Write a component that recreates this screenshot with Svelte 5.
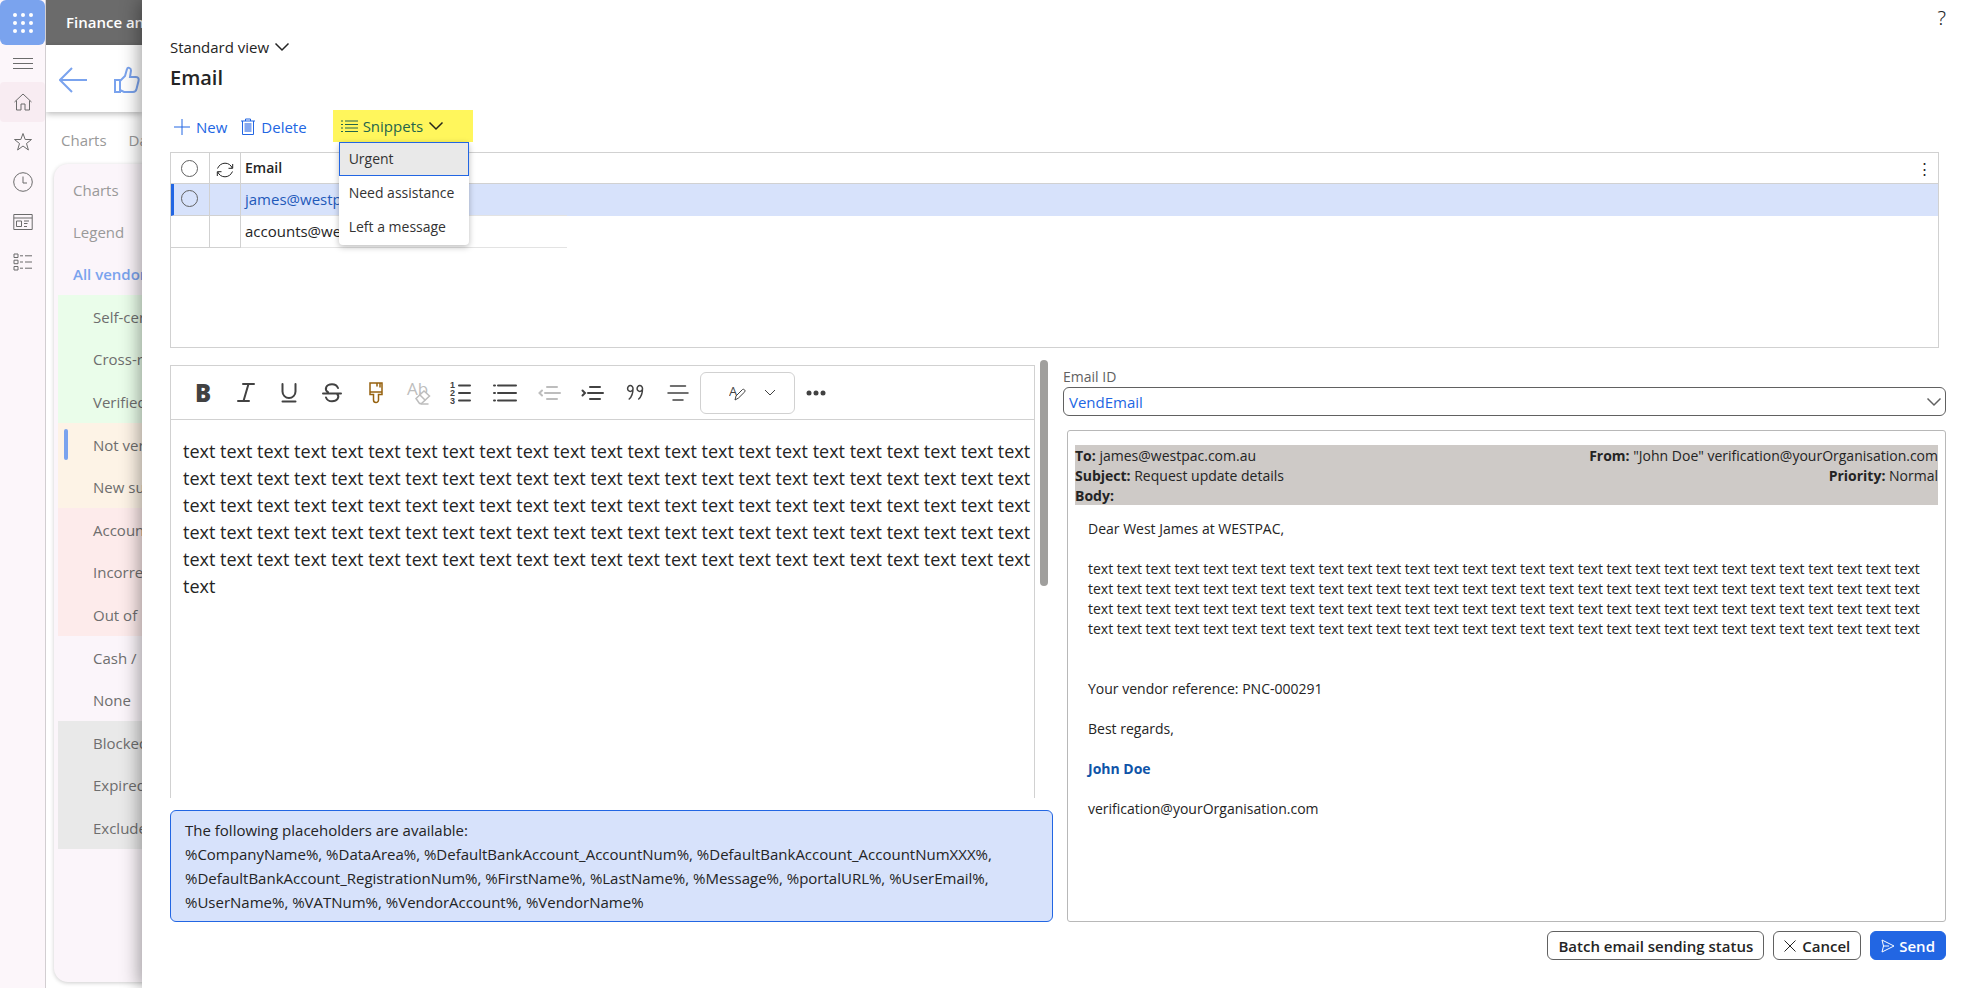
<script>
	let railIcons = ["menu", "home", "star", "clock", "workspace", "modules"]

	let groups = [
		{ tone: "plain", items: ["Charts", "Legend", "All vendors"] },
		{ tone: "green", items: ["Self-certified", "Cross-referenced", "Verified"] },
		{ tone: "orange", items: ["Not verified", "New suppliers"] },
		{ tone: "red", items: ["Account", "Incorrect", "Out of"] },
		{ tone: "plain", items: ["Cash /", "None"] },
		{ tone: "grey", items: ["Blocked", "Expired", "Excluded"] }
	]

	let contacts = [
		{ email: "james@westpac.com.au", selected: true },
		{ email: "accounts@westpac.com.au", selected: false }
	]

	let snippets = ["Urgent", "Need assistance", "Left a message"]
	let snippetsOpen = true
	let activeSnippet = "Urgent"

	let tools = ["bold", "italic", "underline", "strike", "painter", "clear", "numbers", "bullets", "outdent", "indent", "quote", "center"]

	let emailId = "VendEmail"
	let message = Array(116).fill("text").join(" ")

	function pick(name) {
		activeSnippet = name
		snippetsOpen = false
	}
</script>

{#snippet chevron()}
	<svg class="chevron" width="16" height="10" viewBox="0 0 16 10"><path d="M1.500 1.500L8 8l6.500-6.500" /></svg>
{/snippet}

{#snippet railIcon(name)}
	<svg width="20" height="20" viewBox="0 0 20 20">
		{#if name === "menu"}
			<path d="M0 4.500h20M0 9.500h20M0 14.500h20" />
		{:else if name === "home"}
			<path d="M1.500 10L10 2l8.500 8M3.500 8.500V18h4.500v-6h4v6h4.500V8.500" />
		{:else if name === "star"}
			<path d="M10 1.500l2.200 6h6.300l-5 4 1.900 6.500-5.400-4-5.400 4 1.900-6.500-5-4h6.300z" />
		{:else if name === "clock"}
			<circle cx="10" cy="10" r="9.300" /><path d="M10 4.500V11h4" />
		{:else if name === "workspace"}
			<path d="M.8 2.500h18.400v15H.8zM.8 6h18.400M3.500 9h5v5.500h-5zM11 9h5M11 11.500h3.500M11 14.500h3" />
		{:else}
			<path d="M1 2h4v3.500H1zM1 8.200h4v3.500H1zM1 14.500h4V18H1zM7 3.800h3M12 3.800h7M7 10h3M12 10h7M7 16.200h3M12 16.200h7" />
		{/if}
	</svg>
{/snippet}

{#snippet toolIcon(name)}
	<svg class={name} width="26" height="26" viewBox="0 0 26 26">
		{#if name === "bold"}
			<text x="5" y="22" font-size="24" font-weight="800">B</text>
		{:else if name === "italic"}
			<path d="M10 4h11M5 21h11M15.500 4l-5 17" />
		{:else if name === "underline"}
			<path d="M6.500 4v7.500a6.500 6.500 0 0 0 13 0V4M6.500 21.500h13" />
		{:else if name === "strike"}
			<path d="M4 13.500h18M19 8C18 5.500 16 4.200 13 4.200c-6 0-8 5.300-4 8M7 17.500c1 2.500 3 3.800 6 3.800 5.500 0 8-4.300 5-7.500" />
		{:else if name === "painter"}
			<path d="M7 3h12v11.500h-3.500V20a2.500 2.500 0 0 1-5 0v-5.500H7zM7 12h12M14 3v3M17 3v4" />
		{:else if name === "clear"}
			<text x="1" y="15" font-size="17">Ab</text>
			<path class="eraser" d="M10 18.500l8-7.500 5.500 5-8 7.500h-2z" /><path d="M14 15l5 5M15 24h7" />
		{:else if name === "numbers"}
			<text x="1" y="8" font-size="9" font-weight="800">1</text>
			<text x="1" y="16" font-size="9" font-weight="800">2</text>
			<text x="1" y="24" font-size="9" font-weight="800">3</text>
			<path d="M10 5.500h11M10 13h11M10 20.500h11" />
		{:else if name === "bullets"}
			<path d="M6 5.500h18M6 13h18M6 20.500h18M2 5.500h1M2 13h1M2 20.500h1" />
		{:else if name === "outdent"}
			<path d="M11 7h10M9 13h15M11 19h10M6 10.500L3.500 13 6 15.500" />
		{:else if name === "indent"}
			<path d="M11 7h10M9 13h15M11 19h10M3.500 10.500L6 13l-2.500 2.500" />
		{:else if name === "quote"}
			<path d="M11 8.500a2.700 3 0 1 0-5.400 0 2.700 3 0 1 0 5.400 0c0 5-1 8-3.800 10.500M20.500 8.500a2.700 3 0 1 0-5.400 0 2.700 3 0 1 0 5.400 0c0 5-1 8-3.800 10.500" />
		{:else}
			<path d="M5.500 6h15M3 13h20M8 20h10" />
		{/if}
	</svg>
{/snippet}

<div class="app">
	<nav class="rail" aria-label="Main">
		<button class="waffle" aria-label="Apps">
			<svg width="20" height="20" viewBox="0 0 20 20">
				{#each [2, 10, 18] as y}
					{#each [2, 10, 18] as x}
						<circle cx={x} cy={y} r="2" />
					{/each}
				{/each}
			</svg>
		</button>
		{#each railIcons as name}
			<button class="rail-btn" class:current={name === "home"} aria-label={name}>{@render railIcon(name)}</button>
		{/each}
	</nav>

	<div class="behind">
		<header class="topbar">Finance and</header>
		<div class="actions">
			<svg width="28" height="26" viewBox="0 0 28 26"><path d="M28 13H1M13 1L1 13l12 12" /></svg>
			<svg width="26" height="28" viewBox="0 0 26 28"><path d="M1 14h5v12H1zM6 15l5-5 2-7c.5-2 4-1.500 4 1.500L16 11h6c2.500 0 3 2 2.500 4l-2 8c-.5 2-1.500 3-3.500 3h-9l-4-2z" /></svg>
		</div>
		<div class="tabs"><span>Charts</span><span>Data</span></div>
		<div class="card">
			{#each groups as group, g}
				<ul class="group {group.tone}" class:top={g === 0}>
					{#each group.items as item}
						<li class:all={item === "All vendors"} class:marked={item === "Not verified"}>{item}</li>
					{/each}
				</ul>
			{/each}
		</div>
	</div>

	<main class="panel">
		<button class="help" aria-label="Help">?</button>
		<button class="view">Standard view {@render chevron()}</button>
		<h1>Email</h1>

		<div class="toolbar">
			<button class="cmd">
				<svg width="16" height="16" viewBox="0 0 16 16"><path d="M8 0v16M0 8h16" /></svg>
				New
			</button>
			<button class="cmd">
				<svg width="14" height="18" viewBox="0 0 14 18"><path class="can" d="M3.500 5h7v9h-7z" /><path d="M0 3h14M4.500 3V1h5v2M1.500 3v13.500h11V3" /></svg>
				Delete
			</button>
			<div class="snip">
				<button class="cmd snip-btn" aria-expanded={snippetsOpen} on:click={() => (snippetsOpen = !snippetsOpen)}>
					<svg width="17" height="12" viewBox="0 0 17 12"><path d="M0 1h2M4 1h13M0 4.500h2M4 4.500h13M0 8h2M4 8h13M0 11.500h2M4 11.500h13" /></svg>
					Snippets
					{@render chevron()}
				</button>
				{#if snippetsOpen}
					<div class="menu">
						{#each snippets as name}
							<button class:active={name === activeSnippet} on:click={() => pick(name)}>{name}</button>
						{/each}
					</div>
				{/if}
			</div>
		</div>

		<div class="grid">
			<table>
				<thead>
					<tr>
						<th class="pick"><input type="checkbox" aria-label="Select all" /></th>
						<th class="sync">
							<svg width="18" height="16" viewBox="0 0 18 16"><path d="M1.500 6.500C3 3 6 1.200 9 1.200c3.300 0 6 1.800 7.200 4.800M16.700 2v4.300h-4.200M16.500 9.500C15 13 12 14.800 9 14.800c-3.300 0-6-1.800-7.200-4.800M1.300 14V9.700h4.200" /></svg>
						</th>
						<th class="mail">Email</th>
						<th class="more"><button aria-label="Grid options">&#8942;</button></th>
					</tr>
				</thead>
				<tbody>
					{#each contacts as { email, selected }}
						<tr class:selected>
							<td class="pick">
								{#if selected}<input type="checkbox" aria-label="Select {email}" />{/if}
							</td>
							<td class="sync"></td>
							<td class="mail">{email}</td>
							<td></td>
						</tr>
					{/each}
				</tbody>
			</table>
		</div>

		<div class="columns">
			<section class="left">
				<div class="scroll">
					<div class="editor">
						<div class="tools">
							<div class="tool-set">
								{#each tools as name}
									<button aria-label={name}>{@render toolIcon(name)}</button>
								{/each}
							</div>
							<button class="styles" aria-label="Styles">
								<svg width="18" height="18" viewBox="0 0 18 18"><text x="0" y="12" font-size="13">A</text><path class="pen" d="M6 16l1-4 6.500-6.500c1-1 3.500 1 2.300 2.300L9.500 14z" /></svg>
								<svg width="12" height="8" viewBox="0 0 12 8"><path d="M1 1l5 5 5-5" /></svg>
							</button>
							<button class="dots" aria-label="More">
								<svg width="20" height="6" viewBox="0 0 20 6"><circle cx="3" cy="3" r="2.500" /><circle cx="10" cy="3" r="2.500" /><circle cx="17" cy="3" r="2.500" /></svg>
							</button>
						</div>
						<textarea aria-label="Message" bind:value={message}></textarea>
					</div>
					<div class="thumb"></div>
				</div>
				<div class="hint">
					The following placeholders are available:<br />
					%CompanyName%, %DataArea%, %DefaultBankAccount_AccountNum%, %DefaultBankAccount_AccountNumXXX%,<br />
					%DefaultBankAccount_RegistrationNum%, %FirstName%, %LastName%, %Message%, %portalURL%, %UserEmail%,<br />
					%UserName%, %VATNum%, %VendorAccount%, %VendorName%
				</div>
			</section>

			<section class="right">
				<label for="emailId">Email ID</label>
				<div class="select">
					<select id="emailId" bind:value={emailId}>
						<option>VendEmail</option>
					</select>
					{@render chevron()}
				</div>
				<div class="preview">
					<div class="meta">
						<div><b>To:</b> james@westpac.com.au<br /><b>Subject:</b> Request update details<br /><b>Body:</b></div>
						<div class="end"><b>From:</b> "John Doe" verification@yourOrganisation.com<br /><b>Priority:</b> Normal</div>
					</div>
					<div class="body">
						<p>Dear West James at WESTPAC,</p>
						<p class="long">{message}</p>
						<p>Your vendor reference: PNC-000291</p>
						<p>Best regards,</p>
						<p class="sign">John Doe</p>
						<p>verification@yourOrganisation.com</p>
					</div>
				</div>
			</section>
		</div>

		<footer>
			<button>Batch email sending status</button>
			<button>
				<svg width="12" height="12" viewBox="0 0 12 12"><path d="M.5.5l11 11M11.500.5l-11 11" /></svg>
				Cancel
			</button>
			<button class="primary">
				<svg width="14" height="14" viewBox="0 0 14 14"><path d="M1 1l12 6-12 6 1.500-6zM2.500 7H8" /></svg>
				Send
			</button>
		</footer>
	</main>
</div>

<style>
	:global(body) {
		background: #fff;
		color: #242424;
		font: 15px/20px "Open Sans", "Noto Sans", sans-serif;
	}

	.app {
		display: grid;
		grid-template-columns: 46px 96px 1fr;
		min-height: 100vh;
	}

	.app * {
		box-sizing: border-box;
	}

	button, select, textarea {
		font: inherit;
		color: inherit;
		background: none;
		border: 0;
		padding: 0;
		margin: 0;
	}

	svg {
		display: block;
		flex: none;
		fill: none;
		stroke: currentColor;
	}

	svg text {
		fill: currentColor;
		stroke: none;
	}

	/* left rail */
	.rail {
		display: flex;
		flex-direction: column;
		background: #fcf6fa;
		border-right: 1px solid #d2ced1;
		color: #6b6b6b;
	}

	.waffle {
		display: grid;
		place-items: center;
		height: 45px;
		background: #7aa3ee;
		border-radius: 6px;
	}

	.waffle circle {
		fill: #fff;
		stroke: none;
	}

	.rail-btn {
		display: grid;
		place-items: center;
		height: 40px;
	}

	/* the menu toggle is a little shorter than the rest */
	.rail-btn:nth-child(2) {
		height: 37px;
	}

	.rail-btn.current {
		background: #f8ecf2;
		border-radius: 4px;
	}

	/* page behind the panel */
	.behind {
		overflow: hidden;
		white-space: nowrap;
		display: flex;
		flex-direction: column;
		background: #fff;
	}

	.topbar {
		height: 45px;
		padding-left: 20px;
		background: #6b6b6b;
		color: #fff;
		font-weight: 600;
		line-height: 45px;
	}

	.actions {
		display: flex;
		align-items: center;
		gap: 27px;
		height: 67px;
		padding: 3px 0 0 13px;
		color: #7aa3ee;
		stroke-width: 2;
		box-shadow: 0 2px 6px #0004;
		z-index: 1;
	}

	.tabs {
		display: flex;
		gap: 22px;
		padding: 18px 15px 14px;
		color: #999;
	}

	.card {
		flex: 1;
		margin: 0 0 6px 8px;
		width: 300px;
		padding: 5px 0 0 4px;
		background: #fbf5fa;
		border-radius: 14px;
		box-shadow: 0 1px 4px #0003;
	}

	.group {
		list-style: none;
		margin: 0;
		padding: 0;
		color: #6e6e6e;
	}

	.group li {
		display: flex;
		align-items: center;
		height: 42px;
		padding-left: 35px;
	}

	.group li:nth-child(odd) {
		height: 43px;
	}

	.group.top li {
		height: 42px;
		padding-left: 15px;
		color: #999;
	}

	.group.top .all {
		color: #7aa3ee;
		font-weight: 600;
	}

	.group .marked {
		gap: 25px;
		padding-left: 6px;
	}

	.marked::before {
		content: "";
		width: 4px;
		height: 31px;
		border-radius: 2px;
		background: #7aa3ee;
	}

	.green { background: #eafdea; }
	.orange { background: #fdf3e6; }
	.red { background: #fdebeb; }
	.grey { background: #e9e9e9; }

	/* panel */
	.panel {
		position: relative;
		z-index: 2;
		display: flex;
		flex-direction: column;
		padding: 37px 18px 28px 28px;
		background: #fff;
		box-shadow: -2px 0 18px #0006;
		min-width: 0;
	}

	.help {
		position: absolute;
		top: 6px;
		right: 18px;
		font-family: "Noto Sans", sans-serif;
		font-size: 20px;
		font-weight: 300;
		line-height: 24px;
	}

	.view {
		display: flex;
		align-items: center;
		align-self: flex-start;
		gap: 5px;
	}

	h1 {
		margin: 8px 0 19px;
		font-size: 20px;
		font-weight: 600;
		line-height: 26px;
	}

	.toolbar {
		display: flex;
		padding-left: 4px;
		color: #2266e3;
	}

	.cmd {
		display: flex;
		align-items: center;
		gap: 6px;
		height: 34px;
		margin-right: 14px;
	}

	.can {
		fill: #86a9f0;
		stroke: none;
	}

	.snip {
		position: relative;
		margin-left: 12px;
		width: 140px;
	}

	.snip-btn {
		width: 100%;
		height: 32px;
		padding-left: 8px;
		gap: 5px;
		background: #fff65c;
		color: #24654c;
	}

	.chevron {
		stroke-width: 1.5;
	}

	.snip-btn .chevron {
		color: #26261a;
	}

	.menu {
		position: absolute;
		top: 32px;
		left: 6px;
		z-index: 3;
		width: 130px;
		display: flex;
		flex-direction: column;
		padding-bottom: 1px;
		background: #fff;
		border-radius: 4px;
		box-shadow: 0 2px 6px #0004;
		color: #333;
		font-size: 14px;
	}

	.menu button {
		height: 34px;
		padding-left: 9px;
		border: 1px solid transparent;
		text-align: left;
	}

	.menu .active {
		background: #e9e9e9;
		border-color: #2266e3;
	}

	/* contact grid */
	.grid {
		height: 196px;
		margin: 8px 7px 17px 0;
		border: 1px solid #d1d1d1;
	}

	table {
		width: 100%;
		border-collapse: separate;
		border-spacing: 0;
		table-layout: fixed;
	}

	th, td {
		height: 32px;
		padding: 0 0 2px;
		text-align: left;
		font-weight: 400;
		overflow: hidden;
	}

	th {
		height: 31px;
		padding-bottom: 0;
		border-bottom: 1px solid #d1d1d1;
	}

	.pick {
		width: 39px;
		border-right: 1px solid #d1d1d1;
		border-bottom: 1px solid #d1d1d1;
	}

	.sync {
		width: 31px;
		border-right: 1px solid #d1d1d1;
		border-bottom: 1px solid #d1d1d1;
	}

	.sync svg {
		margin: 3px auto 0;
	}

	.mail {
		width: 326px;
		padding-left: 4px;
	}

	th.mail {
		font-weight: 600;
		font-size: 14px;
	}

	td.mail {
		border-bottom: 1px solid #e3e3e3;
	}

	.more {
		text-align: right;
		padding-right: 9px;
	}

	.more button {
		width: 12px;
	}

	.pick input {
		appearance: none;
		display: block;
		width: 17px;
		height: 17px;
		margin: 0 0 0 10px;
		border: 1px solid #616161;
		border-radius: 50%;
	}

	.selected {
		background: #d7e2fb;
		color: #1f59b9;
	}

	.selected .pick {
		border-left: 3px solid #2266e3;
	}

	.selected .pick input {
		margin-left: 7px;
	}

	/* editor and preview */
	.columns {
		flex: 1;
		display: grid;
		grid-template-columns: 1fr 1fr;
		gap: 10px;
	}

	.left, .right {
		display: flex;
		flex-direction: column;
		min-width: 0;
	}

	.scroll {
		flex: 1;
		display: flex;
		gap: 5px;
		padding-right: 5px;
		margin-top: -5px;
	}

	.editor {
		flex: 1;
		display: flex;
		flex-direction: column;
		margin-top: 5px;
		border: 1px solid #d1d1d1;
		border-bottom: 0;
	}

	.tools {
		display: flex;
		align-items: center;
		height: 54px;
		padding-left: 10px;
		border-bottom: 1px solid #d1d1d1;
		color: #424242;
	}

	.tool-set {
		display: grid;
		grid-template-columns: repeat(12, 1fr);
		width: 519px;
	}

	.tool-set button {
		display: grid;
		place-items: center;
	}

	.tool-set svg {
		stroke-width: 2;
		stroke-linecap: round;
	}

	.tool-set .quote, .tool-set .center {
		stroke-width: 1.5;
	}

	.tool-set .painter {
		color: #96620f;
		stroke-width: 1.5;
	}

	.tool-set .clear, .tool-set .outdent {
		color: #bdbdbd;
	}

	.tool-set .clear {
		stroke-width: 1.5;
	}

	.tool-set .numbers text {
		font-family: "Liberation Sans", sans-serif;
	}

	.eraser, .pen {
		fill: #fff;
	}

	.styles {
		display: flex;
		align-items: center;
		justify-content: space-between;
		width: 95px;
		height: 42px;
		padding: 0 18px 0 28px;
		border: 1px solid #d1d1d1;
		border-radius: 6px;
	}

	.dots {
		margin-left: 11px;
	}

	.dots svg {
		fill: currentColor;
		stroke: none;
	}

	textarea {
		flex: 1;
		padding: 18px 0 0 12px;
		font-size: 18px;
		line-height: 27px;
		resize: none;
		outline: 0;
		overflow: hidden;
	}

	.thumb {
		width: 8px;
		height: 226px;
		border-radius: 4px;
		background: #a09f9d;
	}

	.hint {
		margin-top: 12px;
		padding: 7px 14px;
		border: 1px solid #2266e3;
		border-radius: 6px;
		background: #d7e2fb;
		line-height: 24px;
		white-space: nowrap;
	}

	label {
		margin-top: 2px;
		color: #616161;
		font-size: 14px;
	}

	.select {
		display: grid;
		align-items: center;
	}

	.select > :global(*) {
		grid-area: 1 / 1;
	}

	select {
		appearance: none;
		height: 29px;
		padding: 0 5px;
		border: 1px solid #616161;
		border-radius: 6px;
		color: #2266e3;
	}

	.select .chevron {
		justify-self: end;
		margin-right: 4px;
		color: #616161;
		pointer-events: none;
	}

	.preview {
		flex: 1;
		margin: 14px 0 0 4px;
		padding: 14px 7px;
		border: 1px solid #b8b8b8;
		border-radius: 3px;
		font-size: 14px;
	}

	.meta {
		display: flex;
		justify-content: space-between;
		height: 60px;
		padding-top: 1px;
		background: #cecac7;
	}

	.end {
		text-align: right;
	}

	.body {
		padding: 14px 13px;
	}

	.body p {
		margin: 0 0 20px;
	}

	.body .long {
		margin-bottom: 40px;
	}

	.sign {
		color: #0f54a8;
		font-weight: 700;
	}

	footer {
		display: flex;
		justify-content: flex-end;
		gap: 9px;
		margin-top: 9px;
	}

	footer button {
		display: flex;
		align-items: center;
		gap: 6px;
		height: 29px;
		padding: 0 10px;
		border: 1px solid #616161;
		border-radius: 6px;
		font-weight: 600;
	}

	footer .primary {
		gap: 4px;
		background: #2266e3;
		border-color: #2266e3;
		color: #fff;
	}
</style>
